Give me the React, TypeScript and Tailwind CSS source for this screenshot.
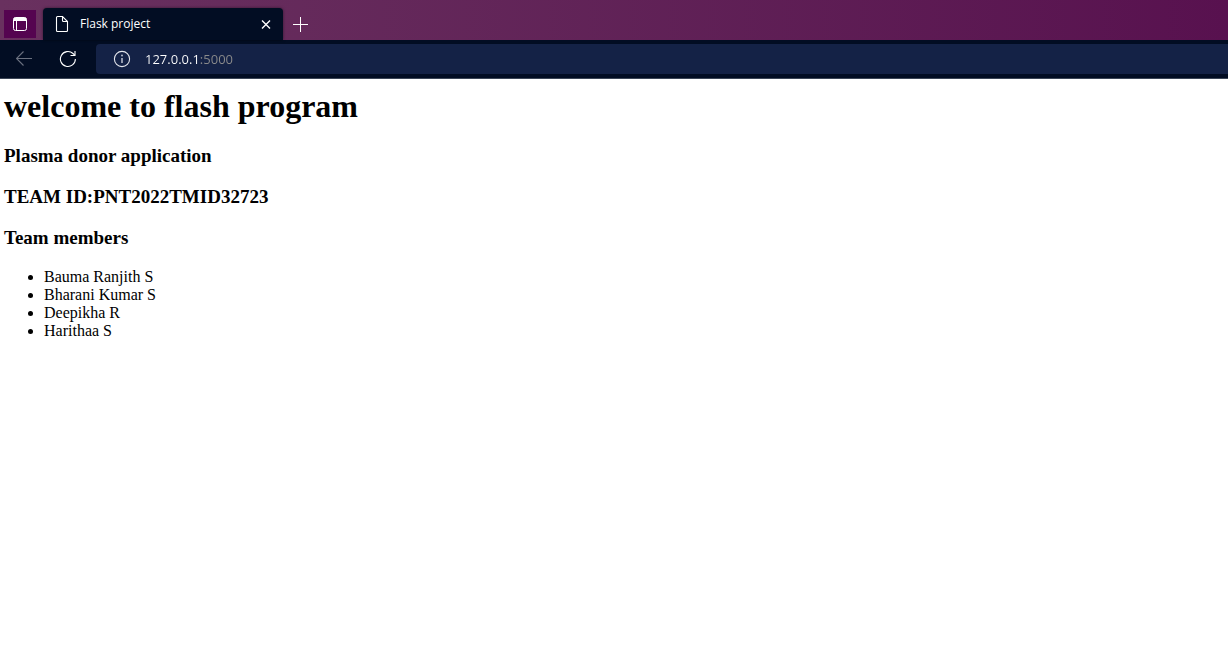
import React from "react";

const members = ["Bauma Ranjith S", "Bharani Kumar S", "Deepikha R", "Harithaa S"];

function TabActionsIcon() {
  return (
    <svg width="16" height="16" viewBox="0 0 16 16" fill="none" aria-hidden="true">
      <rect x="1.5" y="1.5" width="13" height="13" rx="2" stroke="#fff" />
      <path d="M1.5 3.5a2 2 0 0 1 2-2h9a2 2 0 0 1 2 2V5h-13z" fill="#fff" />
      <path d="M4.5 5v9.5" stroke="#fff" />
    </svg>
  );
}

function PageIcon() {
  return (
    <svg width="14" height="18" viewBox="0 0 14 18" fill="none" stroke="#fff" strokeWidth="1.1" aria-hidden="true">
      <path d="M2.5 1.5h5l5 5v9a1 1 0 0 1-1 1h-9a1 1 0 0 1-1-1v-13a1 1 0 0 1 1-1z" />
      <path d="M7.5 1.5v4a1 1 0 0 0 1 1h4" />
    </svg>
  );
}

function CloseIcon() {
  return (
    <svg width="10" height="10" viewBox="0 0 10 10" stroke="#fff" strokeWidth="1.4" aria-hidden="true">
      <path d="M1 1.5l8 8M9 1.5l-8 8" />
    </svg>
  );
}

function PlusIcon() {
  return (
    <svg width="15" height="15" viewBox="0 0 15 15" stroke="#fff" aria-hidden="true">
      <path d="M7.5 0v15M0 7.5h15" />
    </svg>
  );
}

function BackIcon() {
  return (
    <svg width="16" height="16" viewBox="0 0 16 16" fill="none" stroke="#6b7180" strokeWidth="1.1" aria-hidden="true">
      <path d="M16 7.5H.8M7.5 .5l-7 7 7 7" />
    </svg>
  );
}

function ReloadIcon() {
  return (
    <svg width="18" height="18" viewBox="0 0 18 18" fill="none" stroke="#fff" strokeWidth="1.1" aria-hidden="true">
      <path d="M16.4 9a7.5 7.5 0 1 1-2.4-5.5l1.7 1.7" />
      <path d="M16 1v4.5h-4.5" />
    </svg>
  );
}

function InfoIcon() {
  return (
    <svg width="18" height="18" viewBox="0 0 18 18" fill="none" aria-hidden="true">
      <circle cx="9" cy="9" r="7.6" stroke="#e4e6ec" strokeWidth="1.1" />
      <path d="M9 8v5" stroke="#b4b9c7" strokeWidth="1.6" />
      <circle cx="9" cy="5.5" r="1" fill="#b4b9c7" />
    </svg>
  );
}

export default function App() {
  return (
    <div className="min-h-screen bg-white">
      <header className="font-['Open_Sans','Noto_Sans',sans-serif] text-white">
        <div className="flex h-10 items-end bg-linear-to-r from-[#69315f] to-[#58114f] pl-1">
          <button
            type="button"
            aria-label="Tab actions menu"
            className="mb-0.5 flex h-7 w-8 items-center justify-center bg-[#550450]"
          >
            <TabActionsIcon />
          </button>
          <div className="ml-[7px] flex h-8 w-60 items-center rounded-t bg-[#020d23] px-3 shadow-[0_0_3px_#00000080]">
            <PageIcon />
            <span className="ml-[11px] flex-1 text-xs">Flask project</span>
            <button type="button" aria-label="Close tab">
              <CloseIcon />
            </button>
          </div>
          <button type="button" aria-label="New tab" className="mb-2 ml-[9px] flex size-4 items-center justify-center">
            <PlusIcon />
          </button>
        </div>
        <div className="flex h-[39px] items-center border-b border-[#3c4657] bg-[#020d23]">
          <button type="button" aria-label="Back" disabled className="ml-4 flex w-4 justify-center">
            <BackIcon />
          </button>
          <button type="button" aria-label="Reload" className="ml-[27px] flex w-[18px] justify-center">
            <ReloadIcon />
          </button>
          <div className="ml-[19px] flex h-[30px] min-w-0 flex-1 items-center rounded-l bg-[#142246] pl-[17px]">
            <button type="button" aria-label="View site information">
              <InfoIcon />
            </button>
            <input
              type="text"
              aria-label="Address"
              defaultValue="127.0.0.1:5000"
              className="ml-3.5 min-w-0 flex-1 bg-linear-to-r from-white from-[54px] to-[#8b8b8b] to-[54px] bg-clip-text pt-0.5 text-[13px] text-transparent caret-white outline-none"
            />
          </div>
        </div>
      </header>
      <main className="flex flex-col gap-5 px-1 pt-2 font-['Liberation_Serif',serif] text-black">
        <h1 className="text-[32px] leading-[38px] font-bold">welcome to flash program</h1>
        <h3 className="text-[19px] leading-[21px] font-bold">Plasma donor application</h3>
        <h3 className="text-[19px] leading-[21px] font-bold">TEAM ID:PNT2022TMID32723</h3>
        <h3 className="text-[19px] leading-[21px] font-bold">Team members</h3>
        <ul className="list-disc pl-10 text-base leading-[18px]">
          {members.map((name) => (
            <li key={name}>{name}</li>
          ))}
        </ul>
      </main>
    </div>
  );
}
